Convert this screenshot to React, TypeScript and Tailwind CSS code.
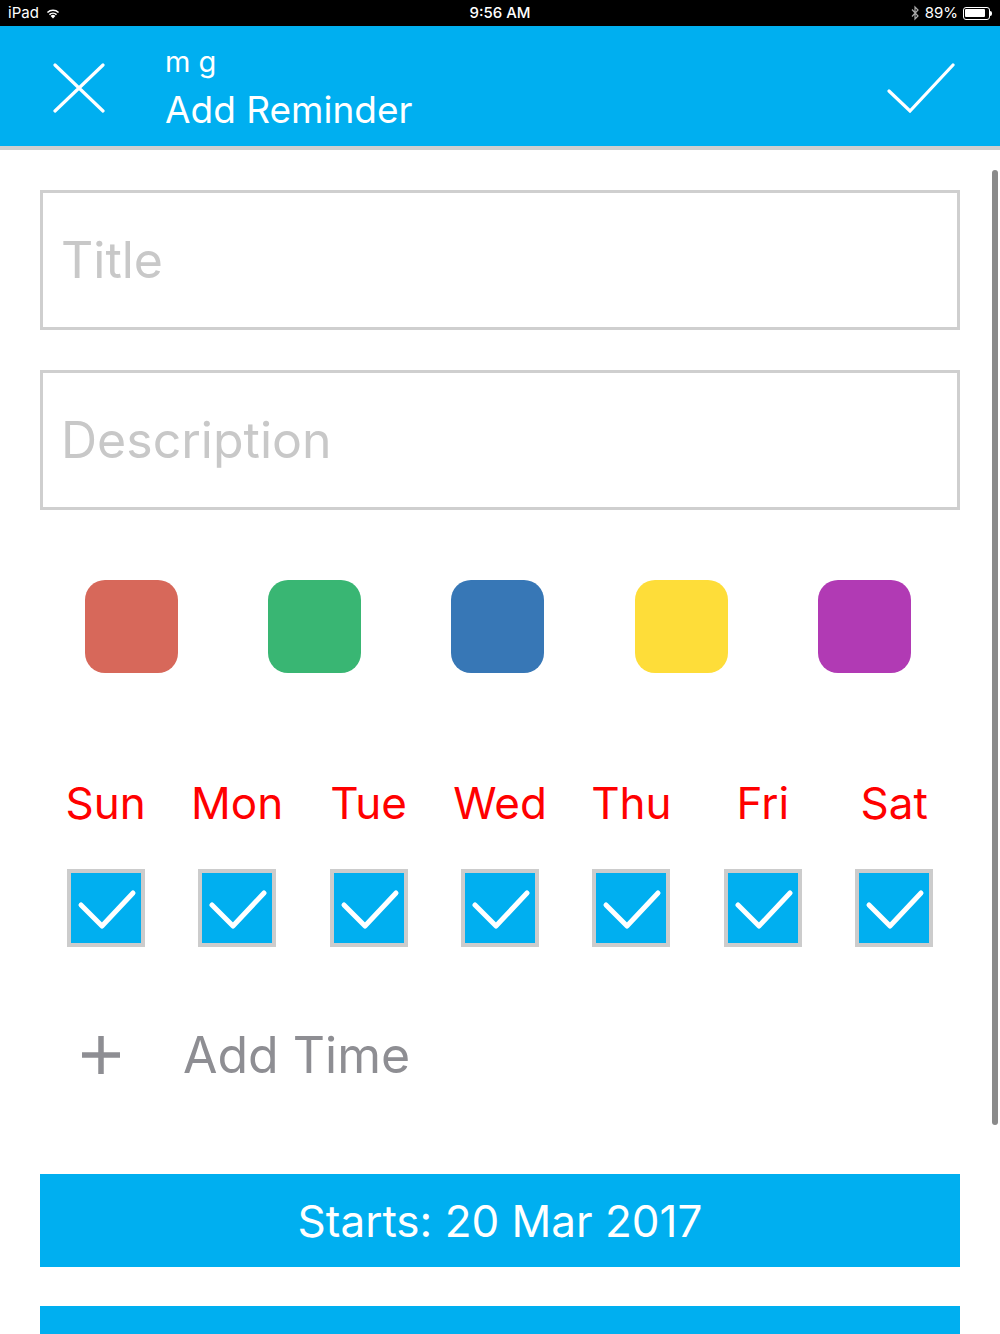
import React from "react";

const days = ["Sun", "Mon", "Tue", "Wed", "Thu", "Fri", "Sat"];
const swatches = ["bg-[#d7685a]", "bg-[#39b673]", "bg-[#3777b6]", "bg-[#fedd39]", "bg-[#b13ab4]"];

function StatusBar() {
  return (
    <div className="flex h-[26px] items-center justify-between bg-black px-[8px] text-[15px] text-white">
      <div className="flex w-[200px] items-center gap-[6px]">
        <span>iPad</span>
        <svg width="16" height="12" viewBox="0 0 16 12" fill="white">
          <path d="M8 11.5 L5.6 8.9 a3.4 3.4 0 0 1 4.8 0 Z" />
          <path d="M3.9 7.1 a5.9 5.9 0 0 1 8.2 0 l-1.1 1.1 a4.4 4.4 0 0 0 -6 0 Z" />
          <path d="M1.9 5 a8.8 8.8 0 0 1 12.2 0 l-1.1 1.1 a7.3 7.3 0 0 0 -10 0 Z" />
        </svg>
      </div>
      <span className="font-medium">9:56 AM</span>
      <div className="flex w-[200px] items-center justify-end gap-[5px]">
        <svg width="10" height="16" viewBox="0 0 10 16" fill="none" stroke="#aaa" strokeWidth="1.2">
          <path d="M2 4.5 L8 11 L5 14 V2 L8 5 L2 11.5" />
        </svg>
        <span>89%</span>
        <div className="flex items-center">
          <div className="h-[13px] w-[27px] rounded-[3px] border border-white p-[1.5px]">
            <div className="h-full w-[88%] rounded-[1px] bg-white" />
          </div>
          <div className="h-[5px] w-[2px] rounded-r bg-white" />
        </div>
      </div>
    </div>
  );
}

function Header() {
  return (
    <div className="flex h-[124px] items-start border-b-[4px] border-[#cfcfcf] bg-[#00aff0] pl-[53px] pr-[45px] text-white">
      <svg className="mt-[37px]" width="52" height="50" viewBox="0 0 52 50" stroke="white" strokeWidth="3.2" strokeLinecap="round">
        <path d="M2 2 L50 48 M50 2 L2 48" />
      </svg>
      <div className="ml-[60px] flex flex-1 flex-col pt-[21px]">
        <span className="text-[29px] leading-[29px]">m g</span>
        <span className="mt-[15px] text-[37px] leading-[37px]">Add Reminder</span>
      </div>
      <svg className="mt-[37px]" width="68" height="50" viewBox="0 0 68 50" fill="none" stroke="white" strokeWidth="3.2" strokeLinecap="round">
        <path d="M2 28 L23 48 L66 2" />
      </svg>
    </div>
  );
}

function Field({ label }: { label: string }) {
  return (
    <div className="flex h-[140px] items-center border-[3px] border-[#cfcfcf] px-[18px] text-[50px] text-[#c8c8c8]">
      {label}
    </div>
  );
}

function DayCheck({ day }: { day: string }) {
  return (
    <div className="flex flex-col items-center">
      <span className="text-[44px] leading-[52px] text-[#ff0000]">{day}</span>
      <div className="mt-[40px] h-[78px] w-[78px] border-[4px] border-[#cccccc] bg-[#00aff0]">
        <svg width="70" height="70" viewBox="0 0 70 70" fill="none" stroke="white" strokeWidth="5" strokeLinecap="round" strokeLinejoin="round">
          <path d="M10 32 L31 53 L62 20" />
        </svg>
      </div>
    </div>
  );
}

export default function App() {
  return (
    <div className="relative h-[1334px] w-[1000px] overflow-hidden bg-white font-['Inter','Liberation_Sans',sans-serif]">
      <StatusBar />
      <Header />

      <div className="flex flex-col px-[40px] pt-[40px]">
        <Field label="Title" />
        <div className="mt-[40px]">
          <Field label="Description" />
        </div>

        <div className="mt-[70px] grid grid-cols-5 pr-[4px]">
          {swatches.map((c, i) => (
            <div key={i} className="flex justify-center">
              <div className={`h-[93px] w-[93px] rounded-[20px] ${c}`} />
            </div>
          ))}
        </div>

        <div className="mt-[104px] grid grid-cols-7">
          {days.map((d) => (
            <DayCheck key={d} day={d} />
          ))}
        </div>

        <div className="mt-[78px] flex h-[60px] items-center pl-[42px] text-[#8e8e93]">
          <svg width="38" height="40" viewBox="0 0 38 40" stroke="#8e8e93" strokeWidth="5.5">
            <path d="M19 1 V39 M0 20 H38" />
          </svg>
          <span className="ml-[63px] text-[50px]">Add Time</span>
        </div>

        <button className="mt-[89px] flex h-[93px] items-center justify-center bg-[#00aff0] text-[44px] text-white">
          Starts: 20 Mar 2017
        </button>
        <div className="mt-[39px] h-[40px] bg-[#00aff0]" />
      </div>

      <div className="absolute right-[2px] top-[170px] h-[955px] w-[6px] rounded-full bg-[#8a8a8a]" />
    </div>
  );
}
